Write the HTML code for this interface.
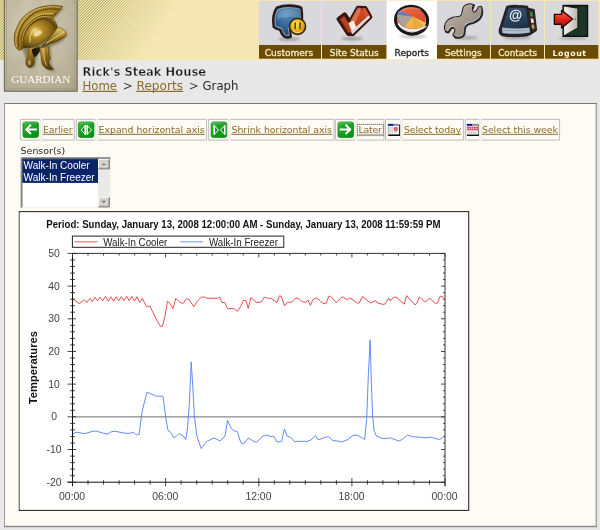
<!DOCTYPE html>
<html><head><meta charset="utf-8"><title>Graph</title>
<style>
html,body{margin:0;padding:0}
body{width:600px;height:530px;background:#e8e8e8;position:relative;overflow:hidden;font-family:"DejaVu Sans","Liberation Sans",sans-serif}
#hdr{position:absolute;left:0;top:0;width:600px;height:60px;background:#f5e6b3;overflow:hidden}
#hline{position:absolute;left:0;top:60px;width:600px;height:1px;background:#eee7cf;opacity:.5}
#stripes{position:absolute;left:0;top:0;width:290px;height:60px;background:repeating-linear-gradient(135deg,#b9b46c 0,#b9b46c 0.95px,#f5e6b3 0.95px,#f5e6b3 1.9px)}
#fade{position:absolute;left:78px;top:0;width:212px;height:60px;background:linear-gradient(118deg,rgba(245,230,179,0.1) 0,rgba(245,230,179,0.4) 18%,rgba(245,230,179,1) 56%)}
svg#pg{position:absolute;left:0;top:0;will-change:transform}
</style></head><body>
<div id="hdr"></div>
<svg id="pg" width="600" height="530" viewBox="0 0 600 530">
<defs>
<linearGradient id="gg" x1="0" y1="0" x2="0.6" y2="1"><stop offset="0" stop-color="#4fc255"/><stop offset="0.35" stop-color="#1fa62a"/><stop offset="1" stop-color="#0c9018"/></linearGradient>
<pattern id="dith" width="2.2" height="2.2" patternUnits="userSpaceOnUse"><rect width="2.2" height="2.2" fill="#fff"/><rect width="1.1" height="1.1" fill="#d6d3cb"/><rect x="1.1" y="1.1" width="1.1" height="1.1" fill="#d6d3cb"/></pattern>
<clipPath id="lgc"><rect x="4.3" y="0" width="72.9" height="91.2"/></clipPath>
</defs>
<clipPath id="hc"><rect x="0" y="0" width="300" height="60"/></clipPath>
<linearGradient id="hf" gradientUnits="userSpaceOnUse" x1="78" y1="30" x2="135" y2="69"><stop offset="0" stop-color="#f5e6b3" stop-opacity="0"/><stop offset="0.45" stop-color="#f5e6b3" stop-opacity="0.5"/><stop offset="1" stop-color="#f5e6b3" stop-opacity="1"/></linearGradient>
<filter id="sbl" x="0" y="0" width="100%" height="100%"><feGaussianBlur stdDeviation="0.45"/></filter>
<g clip-path="url(#hc)"><path d="M-62.00,61l62,-62M-59.30,61l62,-62M-56.60,61l62,-62M-53.90,61l62,-62M-51.20,61l62,-62M-48.50,61l62,-62M-45.80,61l62,-62M-43.10,61l62,-62M-40.40,61l62,-62M-37.70,61l62,-62M-35.00,61l62,-62M-32.30,61l62,-62M-29.60,61l62,-62M-26.90,61l62,-62M-24.20,61l62,-62M-21.50,61l62,-62M-18.80,61l62,-62M-16.10,61l62,-62M-13.40,61l62,-62M-10.70,61l62,-62M-8.00,61l62,-62M-5.30,61l62,-62M-2.60,61l62,-62M0.10,61l62,-62M2.80,61l62,-62M5.50,61l62,-62M8.20,61l62,-62M10.90,61l62,-62M13.60,61l62,-62M16.30,61l62,-62M19.00,61l62,-62M21.70,61l62,-62M24.40,61l62,-62M27.10,61l62,-62M29.80,61l62,-62M32.50,61l62,-62M35.20,61l62,-62M37.90,61l62,-62M40.60,61l62,-62M43.30,61l62,-62M46.00,61l62,-62M48.70,61l62,-62M51.40,61l62,-62M54.10,61l62,-62M56.80,61l62,-62M59.50,61l62,-62M62.20,61l62,-62M64.90,61l62,-62M67.60,61l62,-62M70.30,61l62,-62M73.00,61l62,-62M75.70,61l62,-62M78.40,61l62,-62M81.10,61l62,-62M83.80,61l62,-62M86.50,61l62,-62M89.20,61l62,-62M91.90,61l62,-62M94.60,61l62,-62M97.30,61l62,-62M100.00,61l62,-62M102.70,61l62,-62M105.40,61l62,-62M108.10,61l62,-62M110.80,61l62,-62M113.50,61l62,-62M116.20,61l62,-62M118.90,61l62,-62M121.60,61l62,-62M124.30,61l62,-62M127.00,61l62,-62M129.70,61l62,-62M132.40,61l62,-62M135.10,61l62,-62M137.80,61l62,-62M140.50,61l62,-62M143.20,61l62,-62M145.90,61l62,-62M148.60,61l62,-62M151.30,61l62,-62M154.00,61l62,-62M156.70,61l62,-62M159.40,61l62,-62M162.10,61l62,-62M164.80,61l62,-62M167.50,61l62,-62M170.20,61l62,-62M172.90,61l62,-62M175.60,61l62,-62M178.30,61l62,-62M181.00,61l62,-62M183.70,61l62,-62M186.40,61l62,-62M189.10,61l62,-62M191.80,61l62,-62M194.50,61l62,-62M197.20,61l62,-62M199.90,61l62,-62M202.60,61l62,-62M205.30,61l62,-62M208.00,61l62,-62M210.70,61l62,-62M213.40,61l62,-62M216.10,61l62,-62M218.80,61l62,-62M221.50,61l62,-62M224.20,61l62,-62M226.90,61l62,-62M229.60,61l62,-62M232.30,61l62,-62M235.00,61l62,-62M237.70,61l62,-62M240.40,61l62,-62M243.10,61l62,-62M245.80,61l62,-62M248.50,61l62,-62M251.20,61l62,-62M253.90,61l62,-62M256.60,61l62,-62M259.30,61l62,-62M262.00,61l62,-62M264.70,61l62,-62M267.40,61l62,-62M270.10,61l62,-62M272.80,61l62,-62M275.50,61l62,-62M278.20,61l62,-62M280.90,61l62,-62M283.60,61l62,-62M286.30,61l62,-62M289.00,61l62,-62" stroke="#9c9c50" stroke-width="1.0" fill="none" filter="url(#sbl)"/><rect x="77" y="0" width="223" height="60" fill="url(#hf)"/></g>
<rect x="0" y="59.9" width="600" height="0.45" fill="#f5e6b3"/>
<g id="panel"><rect x="4.5" y="103.5" width="592" height="423" fill="#fdfbf3"/>
<path d="M4,103.5H597" stroke="#7a7a7a" stroke-width="1"/><path d="M4.5,103V527" stroke="#9a9a9a" stroke-width="1"/>
<path d="M596.3,104V527" stroke="#a6a6a6" stroke-width="1.5"/><path d="M4,526.5H597" stroke="#8a8a8a" stroke-width="1.3"/></g>
<g id="tabbg">
<rect x="259" y="1" width="62" height="44" fill="#d9d9dd"/><rect x="259" y="45" width="62" height="13.7" fill="#6a4c07"/>
<rect x="322" y="1" width="64.5" height="44" fill="#d9d9dd"/><rect x="322" y="45" width="64.5" height="13.7" fill="#6a4c07"/>
<rect x="386.8" y="0.6" width="50" height="58.6" fill="#fff"/>
<rect x="437" y="1" width="53" height="44" fill="#d9d9dd"/><rect x="437" y="45" width="53" height="13.7" fill="#6a4c07"/>
<rect x="491" y="1" width="53" height="44" fill="#d9d9dd"/><rect x="491" y="45" width="53" height="13.7" fill="#6a4c07"/>
<rect x="545" y="1" width="53.3" height="44" fill="#d9d9dd"/><rect x="545" y="45" width="53.3" height="13.7" fill="#6a4c07"/>
</g>
<g id="logo" clip-path="url(#lgc)">
<defs>
<linearGradient id="gold1" x1="0" y1="0" x2="1" y2="1"><stop offset="0" stop-color="#e4c868"/><stop offset="0.4" stop-color="#a9821f"/><stop offset="1" stop-color="#58400a"/></linearGradient>
<linearGradient id="gold2" x1="0" y1="0" x2="0.4" y2="1"><stop offset="0" stop-color="#d6b656"/><stop offset="0.5" stop-color="#9a741a"/><stop offset="1" stop-color="#56400a"/></linearGradient>
<linearGradient id="gold3" x1="0" y1="0" x2="0" y2="1"><stop offset="0" stop-color="#e6cc70"/><stop offset="0.55" stop-color="#9c761a"/><stop offset="1" stop-color="#4e3808"/></linearGradient>
<radialGradient id="dome" cx="0.38" cy="0.42" r="0.75"><stop offset="0" stop-color="#f0dc90"/><stop offset="0.22" stop-color="#bf962e"/><stop offset="0.65" stop-color="#7c5c12"/><stop offset="1" stop-color="#3e2c08"/></radialGradient>
<radialGradient id="stone" cx="0.4" cy="0.3" r="0.9"><stop offset="0" stop-color="#d6cfb9"/><stop offset="0.55" stop-color="#c3baa2"/><stop offset="1" stop-color="#aaa085"/></radialGradient>
<filter id="lsh" x="-20%" y="-20%" width="140%" height="140%"><feGaussianBlur stdDeviation="1.3"/></filter>
<filter id="lb" x="-5%" y="-5%" width="110%" height="110%"><feGaussianBlur stdDeviation="0.3"/></filter>
<filter id="tex" x="0" y="0" width="100%" height="100%"><feTurbulence type="fractalNoise" baseFrequency="0.09" numOctaves="3" seed="4" result="n"/><feColorMatrix in="n" type="matrix" values="0 0 0 0 0.45  0 0 0 0 0.4  0 0 0 0 0.3  0.9 0.9 0 0 -0.62"/></filter>
</defs>
<rect x="4" y="0" width="74" height="93" fill="url(#stone)"/>
<rect x="4" y="0" width="74" height="93" filter="url(#tex)" opacity="0.55"/>
<rect x="6.6" y="-2" width="68.2" height="90.8" fill="none" stroke="#8f866d" stroke-width="0.7" opacity="0.55"/>
<g filter="url(#lb)">
<!-- soft shadow -->
<path d="M62.5,6.4C50,4 36,6 25,15.6C18,25 14,37 16,47L22,49C24,56 26,60 26.4,65C30,68 34,66 34,62L36,50L40,48C41,56 41,62 44,66C47,69 50,70 53.3,69.3C50,64 48,60 50,56C49,52 49,49 49,45C56,42 63,39 66,33C62,29 58,28 56,26L52,17Z" fill="#4a3c18" opacity="0.5" filter="url(#lsh)" transform="translate(1.6,1.8)"/>
<!-- crest outer -->
<path d="M62.5,6.4C58,5.4 54,5.2 50.4,5.6C45,6 40,7 36.3,8.5C32,10.4 28,12.8 25,15.6C21.6,18.6 19.4,22 17.9,25.5C15.6,30 14.2,34 14.4,36.8C14,41 14.6,44.4 15.8,46.7C16.8,48.6 18,49.8 19.3,50.2L22.1,48.8C21.4,45 21,41.4 21.4,38.2C22.2,34.4 23.2,31 25,28.3C26.8,25 29.2,22 32,19.8C34.6,17.8 37.4,16.4 40.5,15.6C43,15 45.4,14.8 47.6,16.3C50.6,16 53.6,15 56.1,13.4C58.6,11.4 60.8,9 62.5,6.4Z" fill="url(#gold1)" stroke="#4e380a" stroke-width="0.7"/>
<!-- crest groove + ribs -->
<path d="M58.6,9.6C52,8 42,9 34.6,13C27,17.6 21.6,25 19.2,33C18,38 18,43 18.8,47.6" fill="none" stroke="#5a400c" stroke-width="1.1" opacity="0.85"/>
<path d="M60.4,7.6C53,6 42,7 34,11C26,15.6 19.6,24 17,33C15.8,38 15.8,43 16.6,47" fill="none" stroke="#f3e09a" stroke-width="0.8" opacity="0.7"/>
<path d="M59.6,8.4C52.6,6.8 42,7.8 34.2,12C26.4,16.6 20.4,24.6 18,33C16.8,38 16.8,43 17.6,47.2" fill="none" stroke="#5a400c" stroke-width="1.6" stroke-dasharray="0.7 1.3" opacity="0.8"/>
<path d="M54,14C49,13 42,13.4 36.4,16.4C30,20 25.4,26 23.2,32.6C22,36.6 21.8,41.6 22.4,45.6" fill="none" stroke="#dcc064" stroke-width="1.3" opacity="0.75"/>
<!-- inner crest band -->
<path d="M21.6,48.6C20.8,43 21.2,37 23.4,31.4C26,25.6 30.6,20.6 36.4,17.6C40,15.8 44,15 47.6,16.3C50.6,16 53.6,15 56.1,13.4L52.6,18.6C54.6,20.4 56.4,23.4 57.4,26.4L50,30L30,40L24,47.4Z" fill="#8f6e1c" stroke="#46320a" stroke-width="0.5"/>
<path d="M23.6,46C23,40 24.4,34 27.4,29C30.6,24 35.4,20 41,18.4C44.4,17.6 48,17.8 51,19" fill="none" stroke="#3e2c08" stroke-width="1" opacity="0.7"/>
<path d="M22.4,46.6C21.8,40 23,34 26,28.6C29.4,23 34.6,18.6 40.6,17C44,16.2 47,16.4 50,17.4" fill="none" stroke="#d9bc5e" stroke-width="0.9" opacity="0.8"/>
<!-- dome -->
<path d="M22.8,47.2C22.2,41 23.4,35.6 26.4,31C29,26.6 32.4,23.4 36.3,21.2C39.6,19.6 43,18.8 46.2,19.1C49.6,19.6 52.6,21.4 54.7,24C56.2,25.6 57.2,27.6 57.5,29.7C53,33.6 47,38.6 40.5,43.8C36,45.6 32,46.6 29.2,46.7C27,47.4 24.6,47.6 22.8,47.2Z" fill="url(#dome)" stroke="#46320a" stroke-width="0.6"/>
<path d="M30,42C29.4,37 31,32 34.6,28.6" fill="none" stroke="#f6e8a8" stroke-width="1.6" opacity="0.55" stroke-linecap="round"/>
<ellipse cx="37.6" cy="33.6" rx="4.6" ry="2.4" fill="#fbf0b8" opacity="0.7" transform="rotate(-24 37.6 33.6)"/>
<path d="M46,20.4C50,21.4 53.6,24.4 55.4,28.4" fill="none" stroke="#5a400c" stroke-width="1.2" opacity="0.6"/>
<!-- visor / brow -->
<path d="M42,46.7C45,42.4 48,39.4 50.4,36.8C53,33.6 55.6,30.4 57.5,27.6C60.4,27.8 63,28.8 64.6,30.4C65.8,31.2 66.2,32.2 66,33.2C66,34.6 65.6,35.8 64.6,36.8C60,39.8 54.6,42 49,43.8C46.6,44.8 44.2,45.8 42,46.7Z" fill="url(#gold3)" stroke="#46320a" stroke-width="0.6"/>
<path d="M45.6,43.6C52,39.6 58.6,35.4 64.4,31.6" fill="none" stroke="#f4e4a0" stroke-width="1" opacity="0.85"/>
<path d="M46.6,45.4C53,42.6 59.6,39.4 64.6,36" fill="none" stroke="#4e380a" stroke-width="1.4" stroke-dasharray="0.8 1" opacity="0.75"/>
<path d="M30.6,48.4L40.2,47.2L39.6,52L37,55.6L34.4,57.6L32.4,54Z" fill="#2a1c06"/>
<!-- neck guard -->
<path d="M23.6,46.9C26,47.6 28,47.4 29.4,47C29,50 28.6,53.4 27.8,56.6C26,59.4 25.4,62.6 26.4,65C27.6,67.2 29.4,67.8 30.6,67.2C32.6,66.4 34,64.6 34.2,62.2C34.2,60.2 33.6,58.4 33.5,56.6C33.8,54 34.8,51.6 36.3,49.5L38.6,46.2C34,47.6 29,48 23.6,46.9Z" fill="url(#gold2)" stroke="#46320a" stroke-width="0.6"/>
<path d="M31.6,49.4C33.6,48.6 36,48 37.6,47.6C36,50.4 35,53.4 34.6,56.8C33.2,55 32,52.4 31.6,49.4Z" fill="#241805"/>
<ellipse cx="29.4" cy="62.6" rx="1.6" ry="2.6" fill="#f0dc90" opacity="0.5"/>
<!-- cheek piece -->
<path d="M39.8,48C42.6,47.2 45.6,46.8 48.3,46.7C48.6,50 48.8,53.4 49,56.6L50.6,57.8L49.6,59.4C48.8,60.2 48.4,61.2 48.3,62.2C49.4,65 51.2,67.4 53.3,69.3C50.4,70 47.6,69.4 45.6,68C43.6,66.6 42.4,65 42,63.6C41.4,61.4 41.2,59 41.2,56.6C41,54 40.4,51 39.8,48Z" fill="url(#gold2)" stroke="#46320a" stroke-width="0.6"/>
<path d="M43.4,48.6C43.8,54 44,60 46.6,65.6" fill="none" stroke="#f1dc8c" stroke-width="1" opacity="0.65"/>
<path d="M46,48.4C46.4,54 46.6,59.6 49.4,66" fill="none" stroke="#4e380a" stroke-width="1.3" stroke-dasharray="0.7 1" opacity="0.7"/>
</g>
<text x="40.7" y="82.9" text-anchor="middle" font-family="Liberation Serif, serif" font-size="11.2" fill="#fdfcf8" style="letter-spacing:-0.1px">GUARDIAN</text>

</g>
<rect x="4.35" y="-1" width="72.8" height="92.2" fill="none" stroke="#6f6a5c" stroke-width="1.1"/>
<defs>
<filter id="sh" x="-30%" y="-30%" width="160%" height="160%"><feGaussianBlur stdDeviation="1.1"/></filter>
<filter id="b3" x="-10%" y="-10%" width="120%" height="120%"><feGaussianBlur stdDeviation="0.35"/></filter>
<radialGradient id="bub" cx="0.45" cy="0.3" r="0.8"><stop offset="0" stop-color="#5c8cb6"/><stop offset="0.5" stop-color="#2e5f90"/><stop offset="1" stop-color="#193854"/></radialGradient>
<radialGradient id="smi" cx="0.4" cy="0.35" r="0.75"><stop offset="0" stop-color="#ffe052"/><stop offset="0.6" stop-color="#e4aa12"/><stop offset="1" stop-color="#9c6a04"/></radialGradient>
<linearGradient id="chk" x1="0" y1="0" x2="1" y2="1"><stop offset="0" stop-color="#e0653a"/><stop offset="0.5" stop-color="#c64a22"/><stop offset="1" stop-color="#8e2a10"/></linearGradient>
<linearGradient id="wr" x1="0" y1="0" x2="1" y2="1"><stop offset="0" stop-color="#c8beb2"/><stop offset="0.5" stop-color="#a89c90"/><stop offset="1" stop-color="#8a8078"/></linearGradient>
<linearGradient id="bk" x1="0" y1="0" x2="0.3" y2="1"><stop offset="0" stop-color="#3a5a78"/><stop offset="0.6" stop-color="#243f5a"/><stop offset="1" stop-color="#1a2c40"/></linearGradient>
<linearGradient id="pie1" x1="0" y1="0" x2="1" y2="1"><stop offset="0" stop-color="#e8704a"/><stop offset="1" stop-color="#d2402a"/></linearGradient>
<linearGradient id="arr" x1="0" y1="0" x2="0" y2="1"><stop offset="0" stop-color="#ff6a50"/><stop offset="0.5" stop-color="#e02418"/><stop offset="1" stop-color="#9a0c08"/></linearGradient>
<linearGradient id="door" x1="0" y1="0" x2="1" y2="0"><stop offset="0" stop-color="#f4f2ec"/><stop offset="1" stop-color="#b9b7b0"/></linearGradient>
</defs>
<!-- Customers -->
<ellipse cx="289" cy="39" rx="11" ry="2" fill="#000" opacity="0.22" filter="url(#sh)"/>
<g filter="url(#b3)">
<path d="M277,7.6C284,4.8 296,5 301.2,7.8C302.2,14 302,21.6 300.8,26.8C297.4,28.8 293,29.8 289.6,30L290.8,36.6C289,37.6 286.4,37.6 284.6,36.6C282.4,35 281,32.6 280.2,29.8C277.8,29.2 275.4,28.2 273.8,27C272.8,20.6 273.2,13 277,7.6Z" fill="url(#bub)" stroke="#2a1b1a" stroke-width="2.6" stroke-linejoin="round"/>
<path d="M278.2,9.4C284.4,7 295,7.2 299.8,9.4C300.6,14.8 300.4,21 299.4,25.6C296.4,27.2 292.4,28.2 288.4,28.4L289.2,35.2C287.6,35.8 286.4,35.6 285.4,35C283.6,33.6 282.4,31.4 281.8,28.6C279.4,28 277,27.2 275.4,26C274.6,20.4 275,13.8 278.2,9.4Z" fill="none" stroke="#aeb9c2" stroke-width="1.1" opacity="0.7"/>
<path d="M279,10.6C284.6,8.4 294.4,8.6 298.8,10.4C299.2,13.2 299.2,16 298.8,18.4C292,15.8 284,16.6 277.2,19.6C277,16.2 277.6,13.2 279,10.6Z" fill="#9cc4e4" opacity="0.36"/>
<circle cx="297.6" cy="26.4" r="8" fill="url(#smi)" stroke="#35220a" stroke-width="1.5"/>
<path d="M295.2,23V28.4 M300,23V28.4" stroke="#5a3a06" stroke-width="1.5" stroke-linecap="round"/>
<path d="M292.6,30.4C295,33.2 300,33.2 302.6,30.4" stroke="#fff2a8" stroke-width="1" fill="none" opacity="0.8"/>
</g>
<!-- Site status -->
<ellipse cx="352" cy="38.6" rx="11" ry="1.8" fill="#000" opacity="0.25" filter="url(#sh)"/>
<g filter="url(#b3)">
<path d="M338.4,19L344.6,14.2L350,21.6L357.8,7.6L365.4,8L370.4,17L352.6,34.4L348.2,34Z" fill="url(#chk)" stroke="#38190f" stroke-width="3.9" stroke-linejoin="round"/>
<path d="M350,21.6L357.8,7.6L361.6,8.2L353.8,25.6Z" fill="#e8795a" opacity="0.85"/>
<path d="M361.6,8.2L365.4,8L370.4,17L366.8,20.4Z" fill="#d4522e"/>
<path d="M348.6,23L353.4,20.4L356.4,27.2L351.6,31Z" fill="#f6efe6"/>
<path d="M352.6,34.2L370.2,17.2L368.4,15.4L350.8,31.8Z" fill="#e6e2ea" opacity="0.95"/>
<path d="M339.4,19.2L344.2,15.6L350.8,31.8L348.2,33Z" fill="#b43c1c" opacity="0.7"/>
</g>
<!-- Reports -->
<ellipse cx="413" cy="36.6" rx="14" ry="2" fill="#000" opacity="0.2" filter="url(#sh)"/>
<g filter="url(#b3)">
<ellipse cx="411.6" cy="20.2" rx="16" ry="13.8" fill="#d4d4da" stroke="#1c1818" stroke-width="3.2" transform="rotate(8 411.6 20.2)"/>
<ellipse cx="411.4" cy="18.2" rx="14.4" ry="10.8" fill="url(#pie1)" transform="rotate(8 411.4 18.2)"/>
<path d="M412.6,16.6L397.2,14.6C397.4,19.6 400,24 404.4,26.6Z" fill="#aaa39d"/>
<path d="M412.6,16.6L397.2,14.6C397.4,13 398,11.6 399,10.4Z" fill="#5c7fd0"/>
<path d="M412.6,16.6L404.4,26.6C410,29.6 418,29.6 424,26.2Z" fill="#f2a73c"/>
<path d="M412.6,16.6L424,26.2C425,25.4 425.6,24.2 425.8,23Z" fill="#ecca4c"/>
<path d="M412.6,16.6L404.4,26.6C407,28 410,28.8 413,29Z" fill="#e9c15a" opacity="0.6"/>
<path d="M398,23.6C402,30.6 418,33 426.4,26" fill="none" stroke="#f6f6fa" stroke-width="1.5" opacity="0.9"/>
<path d="M400,11.6C404,7.6 414,6.4 421,9.6" fill="none" stroke="#f6b9a0" stroke-width="1" opacity="0.6"/>
</g>
<!-- Settings -->
<ellipse cx="466" cy="37.8" rx="12" ry="1.8" fill="#000" opacity="0.22" filter="url(#sh)"/>
<clipPath id="wrc"><path d="M470.6,4.3L474,5.3C473,7 472.2,9 472.2,10.6C472.4,12 473.4,12.6 474.6,12.4C475.6,12.2 476.2,11.8 476.6,11.2L478.8,7.2L481,6.8C482.4,9.6 482.6,13 481.4,16C480,19.6 476.6,21.6 473,23C469.4,24 466.4,24.4 465.2,27.4C464.4,30 465,33 464,35.2C462.6,37 460.4,37.8 458,37.8L455.4,37.4L453.4,34.8C454.6,33 455.4,31.4 455.4,30C455.2,28.6 454.2,27.8 453,27.8C452,27.8 451.4,28.2 450.8,28.8L448.4,32.4L446.2,32C444.8,29.6 444.6,26.4 445.8,23.6C447.2,20.4 450.4,18.6 454,17.6C457.6,17 460.6,17.6 462,14.6C462.8,12 462.8,9 464,7C465.6,5.2 468,4.2 470.6,4.3Z"/></clipPath>
<g filter="url(#b3)">
<path d="M470.6,4.3L474,5.3C473,7 472.2,9 472.2,10.6C472.4,12 473.4,12.6 474.6,12.4C475.6,12.2 476.2,11.8 476.6,11.2L478.8,7.2L481,6.8C482.4,9.6 482.6,13 481.4,16C480,19.6 476.6,21.6 473,23C469.4,24 466.4,24.4 465.2,27.4C464.4,30 465,33 464,35.2C462.6,37 460.4,37.8 458,37.8L455.4,37.4L453.4,34.8C454.6,33 455.4,31.4 455.4,30C455.2,28.6 454.2,27.8 453,27.8C452,27.8 451.4,28.2 450.8,28.8L448.4,32.4L446.2,32C444.8,29.6 444.6,26.4 445.8,23.6C447.2,20.4 450.4,18.6 454,17.6C457.6,17 460.6,17.6 462,14.6C462.8,12 462.8,9 464,7C465.6,5.2 468,4.2 470.6,4.3Z" fill="#dde3ea" stroke="#2a2626" stroke-width="2.1" stroke-linejoin="round"/>
<g clip-path="url(#wrc)"><path d="M470.6,4.3L474,5.3C473,7 472.2,9 472.2,10.6C472.4,12 473.4,12.6 474.6,12.4C475.6,12.2 476.2,11.8 476.6,11.2L478.8,7.2L481,6.8C482.4,9.6 482.6,13 481.4,16C480,19.6 476.6,21.6 473,23C469.4,24 466.4,24.4 465.2,27.4C464.4,30 465,33 464,35.2C462.6,37 460.4,37.8 458,37.8L455.4,37.4L453.4,34.8C454.6,33 455.4,31.4 455.4,30C455.2,28.6 454.2,27.8 453,27.8C452,27.8 451.4,28.2 450.8,28.8L448.4,32.4L446.2,32C444.8,29.6 444.6,26.4 445.8,23.6C447.2,20.4 450.4,18.6 454,17.6C457.6,17 460.6,17.6 462,14.6C462.8,12 462.8,9 464,7C465.6,5.2 468,4.2 470.6,4.3Z" fill="url(#wr)" stroke="url(#wr)" stroke-width="1" transform="translate(-1,-2)"/></g>
</g>
<!-- Contacts -->
<ellipse cx="517" cy="37.8" rx="14" ry="1.8" fill="#000" opacity="0.22" filter="url(#sh)"/>
<g filter="url(#b3)">
<path d="M527,8.6L533.6,10L536,30L530,34Z" fill="#3a3230" stroke="#2a2320" stroke-width="2.2" stroke-linejoin="round"/>
<path d="M529.6,11.6L532.6,12.4L533.2,16.6L530.2,16.2Z" fill="#2f8a3c"/>
<path d="M530.4,18.4L533.4,18.8L534,23L531,22.8Z" fill="#e8e2d2"/>
<path d="M531.2,24.6L534.2,24.8L534.6,28.4L531.6,28.8Z" fill="#c9a050"/>
<path d="M507.4,7C512,6 522,6 527,7.2L530.8,30C530.4,33 528.8,34.6 526.4,35.2C519,36 508,36 502.4,34.8C500.4,34 499.8,31.6 500.2,29.4Z" fill="url(#bk)" stroke="#2a2320" stroke-width="2.8" stroke-linejoin="round"/>
<path d="M502,27C509,28.4 521,28.4 529.4,27.2L530,32.6C521,34.2 509,34.2 502.4,33Z" fill="#c4d2df" opacity="0.9"/>
<path d="M502.4,29.8C510,31 521,31 529.6,29.8" stroke="#7d93a8" stroke-width="0.7" fill="none"/>
<path d="M502,27C509,28.4 521,28.4 529.4,27.2" stroke="#1c2a3a" stroke-width="0.8" fill="none"/>
<text x="515.6" y="19.4" text-anchor="middle" font-family="Liberation Sans, sans-serif" font-weight="bold" font-size="13.5" fill="#f2f4f6" transform="rotate(-3 516 16)">@</text>
</g>
<!-- Logout -->
<ellipse cx="573" cy="38.2" rx="14" ry="1.6" fill="#000" opacity="0.2" filter="url(#sh)"/>
<g filter="url(#b3)">
<rect x="563" y="5.4" width="24.6" height="31" fill="#16201a" stroke="#0c0f0d" stroke-width="1.2"/>
<path d="M577.6,6.4H586.6V35.4H566Z" fill="#1e3626"/>
<path d="M563.6,6L577.8,8.2V27.8L563.6,36Z" fill="url(#door)" stroke="#101010" stroke-width="0.8"/>
<circle cx="575.4" cy="19.2" r="0.9" fill="#6c6c6c"/>
<path d="M554.4,14.4H561.6V10.4L572.6,19L561.6,28V24.2H554.4Z" fill="url(#arr)" stroke="#2a0604" stroke-width="1.4" stroke-linejoin="round"/>
</g>

<g font-family="DejaVu Sans, Liberation Sans, sans-serif" font-size="9" fill="#f7ebbe" stroke="#f7ebbe" stroke-width="0.3" text-anchor="middle">
<text x="289" y="56.1">Customers</text><text x="354.2" y="56.1" textLength="48.8" lengthAdjust="spacingAndGlyphs">Site Status</text><text x="411.8" y="56.1" fill="#1c1c1c" stroke="#1c1c1c">Reports</text><text x="463.3" y="56.1" textLength="36.8" lengthAdjust="spacingAndGlyphs">Settings</text><text x="517.6" y="56.1" textLength="38.8" lengthAdjust="spacingAndGlyphs">Contacts</text>
<text x="569.6" y="55.9" font-weight="bold" font-size="7.9" letter-spacing="0.55" fill="#fdf6d8" stroke="none">Logout</text></g>
<text x="82.6" y="75.7" font-family="DejaVu Sans, Liberation Sans, sans-serif" font-weight="bold" font-size="11.6" fill="#161616" stroke="#e8e8e8" stroke-width="0.4" textLength="123.5" lengthAdjust="spacingAndGlyphs">Rick's Steak House</text>
<g font-family="DejaVu Sans, Liberation Sans, sans-serif" font-size="11.9"><text x="82.5" y="89.5" fill="#8a6c2c" textLength="34.5" lengthAdjust="spacingAndGlyphs">Home</text><text x="122.7" y="89.5" fill="#444">&gt;</text><text x="136.5" y="89.5" fill="#8a6c2c" textLength="46.5" lengthAdjust="spacingAndGlyphs">Reports</text><text x="188.7" y="89.5" fill="#444">&gt;</text><text x="202.5" y="89.5" fill="#2a2a2a" textLength="36" lengthAdjust="spacingAndGlyphs">Graph</text></g>
<path d="M82.3,91.4H117.3M136.3,91.4H183.2" stroke="#8a6c2c" stroke-width="1.1"/>
<text x="20.6" y="153.7" font-family="DejaVu Sans, Liberation Sans, sans-serif" font-size="9.45" fill="#222">Sensor(s)</text>
<g id="toolbar" fill="none" stroke-width="1"><path d="M40.4,119.4H20.3V140.1H40.4" stroke="#bcbcbc"/><path d="M40.4,119.4V140.1" stroke="#ece9e2"/><path d="M42.4,119.4H74.2V140.1H42.4" stroke="#bcbcbc"/><path d="M42.4,119.4V140.1" stroke="#ece9e2"/><path d="M95.5,119.4H76.3V140.1H95.5" stroke="#bcbcbc"/><path d="M95.5,119.4V140.1" stroke="#ece9e2"/><path d="M97.4,119.4H206.6V140.1H97.4" stroke="#bcbcbc"/><path d="M97.4,119.4V140.1" stroke="#ece9e2"/><path d="M228.3,119.4H208.7V140.1H228.3" stroke="#bcbcbc"/><path d="M228.3,119.4V140.1" stroke="#ece9e2"/><path d="M230.1,119.4H334.0V140.1H230.1" stroke="#bcbcbc"/><path d="M230.1,119.4V140.1" stroke="#ece9e2"/><path d="M355.1,119.4H335.4V140.1H355.1" stroke="#bcbcbc"/><path d="M355.1,119.4V140.1" stroke="#ece9e2"/><path d="M357.1,119.4H383.9V140.1H357.1" stroke="#bcbcbc"/><path d="M357.1,119.4V140.1" stroke="#ece9e2"/><path d="M400.5,119.4H385.5V140.1H400.5" stroke="#bcbcbc"/><path d="M400.5,119.4V140.1" stroke="#ece9e2"/><path d="M402.5,119.4H463.4V140.1H402.5" stroke="#bcbcbc"/><path d="M402.5,119.4V140.1" stroke="#ece9e2"/><path d="M479.3,119.4H465.3V140.1H479.3" stroke="#bcbcbc"/><path d="M479.3,119.4V140.1" stroke="#ece9e2"/><path d="M481.1,119.4H559.6V140.1H481.1" stroke="#bcbcbc"/><path d="M481.1,119.4V140.1" stroke="#ece9e2"/></g><g transform="translate(22.6,121.6)"><rect x="0.35" y="0.35" width="15.6" height="15.6" rx="2.2" fill="url(#gg)" stroke="#0b8a16" stroke-width="0.7"/><path d="M1.6,1.4H14.6" stroke="#7fd684" stroke-width="0.8" opacity="0.7"/><path d="M14.2,7.8H4.2 M8.3,3.2L3.7,7.8L8.3,12.4" stroke="#fff" stroke-width="2" fill="none"/></g><g transform="translate(78.0,121.6)"><rect x="0.35" y="0.35" width="15.6" height="15.6" rx="2.2" fill="url(#gg)" stroke="#0b8a16" stroke-width="0.7"/><path d="M1.6,1.4H14.6" stroke="#7fd684" stroke-width="0.8" opacity="0.7"/><path d="M7.3,3.9V12.7L3.2,8.3Z M9.3,3.9V12.7L13.6,8.3Z" stroke="#fff" stroke-width="1" fill="#138f1d"/><path d="M7.3,3.5V13.1 M9.3,3.5V13.1" stroke="#fff" stroke-width="1.5"/></g><g transform="translate(210.8,121.6)"><rect x="0.35" y="0.35" width="15.6" height="15.6" rx="2.2" fill="url(#gg)" stroke="#0b8a16" stroke-width="0.7"/><path d="M1.6,1.4H14.6" stroke="#7fd684" stroke-width="0.8" opacity="0.7"/><path d="M3.5,4.1V12.7L7.7,8.4Z M13.9,4.1V12.7L9.7,8.4Z" stroke="#fff" stroke-width="1" fill="#138f1d"/><path d="M3.5,3.7V13.1 M13.9,3.7V13.1" stroke="#fff" stroke-width="1.5"/></g><g transform="translate(337.6,121.6)"><rect x="0.35" y="0.35" width="15.6" height="15.6" rx="2.2" fill="url(#gg)" stroke="#0b8a16" stroke-width="0.7"/><path d="M1.6,1.4H14.6" stroke="#7fd684" stroke-width="0.8" opacity="0.7"/><path d="M2.1,7.8H12.1 M8,3.2L12.6,7.8L8,12.4" stroke="#fff" stroke-width="2" fill="none"/></g><g transform="translate(387.9,123.9)"><rect x="0.3" y="0.6" width="11.9" height="11.5" fill="#111"/><rect x="0" y="0" width="11.2" height="10.5" fill="#fff"/><rect x="0" y="0" width="5.8" height="1.9" fill="#00109a"/><rect x="5.8" y="0" width="5.2" height="1.9" fill="#8a8a8a"/><path d="M2.1,2V9.9M4.3,2V9.9M6.5,2V9.9M8.7,2V9.9M0,4H11M0,6H11M0,8H11" stroke="#c4c4c4" stroke-width="0.7"/><circle cx="7.9" cy="5.2" r="2.1" fill="#cf4a5a"/><rect x="6.9" y="4.8" width="2" height="0.8" fill="#f4c0c6"/><rect x="0" y="1.9" width="0.7" height="8" fill="#9a9a9a"/></g><g transform="translate(466.9,123.9)"><rect x="0" y="0.6" width="12" height="11.5" fill="#111"/><rect x="0" y="0" width="11.4" height="10.6" fill="#fff"/><rect x="0" y="0" width="5.6" height="1.9" fill="#00109a"/><rect x="5.6" y="0" width="6.4" height="1.9" fill="#8a8a8a"/><rect x="0" y="2.4" width="11.4" height="4.4" fill="#f1c9cf"/><path d="M0.3,3.5H11.4M0.3,5.7H11.4" stroke="#cf3f55" stroke-width="1.5" stroke-dasharray="1.7 0.55"/><path d="M2.2,7.1V10.1M4.4,7.1V10.1M6.6,7.1V10.1M8.8,7.1V10.1M0,8.6H12" stroke="#c4c4c4" stroke-width="0.7"/></g><g font-family="DejaVu Sans, Liberation Sans, sans-serif" font-size="9.38" fill="#8a6c2c"><text x="43.0" y="133.1" textLength="29.5" lengthAdjust="spacing">Earlier</text><text x="98.5" y="133.1" textLength="106.2" lengthAdjust="spacing">Expand horizontal axis</text><text x="231.5" y="133.1" textLength="100.5" lengthAdjust="spacing">Shrink horizontal axis</text><text x="358.6" y="133.1" textLength="23.2" lengthAdjust="spacing">Later</text><text x="403.9" y="133.1" textLength="57.3" lengthAdjust="spacing">Select today</text><text x="482.0" y="133.1" textLength="75.9" lengthAdjust="spacing">Select this week</text></g><g stroke="#8a6c2c" stroke-width="1"><path d="M42.8,134.3H72.7"/><path d="M98.3,134.3H204.89999999999998"/><path d="M231.3,134.3H332.2"/><path d="M403.7,134.3H461.4"/><path d="M481.8,134.3H558.1"/></g><rect x="357.3" y="124.4" width="26" height="11.2" fill="none" stroke="#222" stroke-width="0.9" stroke-dasharray="1 1"/><path d="M358.4,134.3H382" stroke="#8a6c2c" stroke-width="1" opacity="0.6"/>
<g id="sel">
<rect x="20.7" y="157.2" width="90" height="50.9" fill="#fff"/>
<path d="M110.2,157.6V207.7H21" stroke="#f0eee6" stroke-width="0.9" fill="none"/>
<path d="M21.1,208.1V157.6H110.7" stroke="#8a8a8a" stroke-width="0.9" fill="none"/>
<path d="M21.95,207.3V158.45H109.8" stroke="#404040" stroke-width="0.85" fill="none"/>
<rect x="22.35" y="159.1" width="75.75" height="23.8" fill="#0a246a"/>
<g font-family="Liberation Sans, sans-serif" font-size="10.05" fill="#fff"><text x="23.6" y="168.6">Walk-In Cooler</text><text x="23.6" y="180.5">Walk-In Freezer</text></g>
<rect x="98.1" y="158.9" width="11.6" height="48.4" fill="url(#dith)"/>
<g id="sbu"><rect x="98.1" y="158.9" width="11.6" height="10.3" fill="#d6d3cb"/><path d="M98.5,168.8V159.3H109.3" stroke="#fff" stroke-width="0.9" fill="none"/><path d="M109.3,159.3V168.8H98.5" stroke="#6a6a6a" stroke-width="0.9" fill="none"/><path d="M108.45,160.2V167.95H99.4" stroke="#a8a59c" stroke-width="0.8" fill="none"/><path d="M101.4,165.6L103.9,163L106.4,165.6Z" fill="#86837c"/><path d="M102.3,166.4H107.2" stroke="#fff" stroke-width="0.7"/></g>
<g id="sbd"><rect x="98.1" y="196.9" width="11.6" height="10.4" fill="#d6d3cb"/><path d="M98.5,206.9V197.3H109.3" stroke="#fff" stroke-width="0.9" fill="none"/><path d="M109.3,197.3V206.9H98.5" stroke="#6a6a6a" stroke-width="0.9" fill="none"/><path d="M108.45,198.2V206.05H99.4" stroke="#a8a59c" stroke-width="0.8" fill="none"/><path d="M101.4,200.8L103.9,203.4L106.4,200.8Z" fill="#86837c"/><path d="M104.6,204L107,201.4" stroke="#fff" stroke-width="0.7"/></g>
</g>
<g id="chart">
<rect x="19.3" y="211.6" width="449.4" height="298.8" fill="#fff" stroke="#2e2e2e" stroke-width="1.1"/><path d="M19.3,212.3V509.8" stroke="#fff" stroke-width="1.1" opacity="0.3"/>
<text x="46.3" y="228" font-family="Liberation Sans, sans-serif" font-weight="bold" font-size="10.2" fill="#111" textLength="394.2" lengthAdjust="spacingAndGlyphs">Period: Sunday, January 13, 2008 12:00:00 AM - Sunday, January 13, 2008 11:59:59 PM</text>
<rect x="72.4" y="236.1" width="211.4" height="11.2" fill="#fff" stroke="#222" stroke-width="1"/>
<path d="M74.3,241.8H97.5" stroke="#e66a6a" stroke-width="1.1"/>
<path d="M180.2,241.8H203" stroke="#7ba0ff" stroke-width="1.1"/>
<g font-family="Liberation Sans, sans-serif" font-size="10.2" fill="#222"><text x="103.3" y="245.6" textLength="64" lengthAdjust="spacingAndGlyphs">Walk-In Cooler</text><text x="209" y="245.6" textLength="69" lengthAdjust="spacingAndGlyphs">Walk-In Freezer</text></g>
<path d="M72.5,416.8H445" stroke="#8a8a8a" stroke-width="1.3"/>
<polyline fill="none" stroke="#e04848" stroke-width="0.95" stroke-linejoin="round" points="72.5,298.7 79.2,303.7 84.2,299.7 86.7,302.5 90.0,298.3 92.2,301.7 95.0,297.2 97.5,300.8 100.0,297.2 102.8,300.8 105.5,296.3 108.3,301.3 110.8,296.7 113.7,301.3 116.2,296.7 118.8,300.8 121.3,296.7 123.8,300.8 126.7,296.3 129.2,300.8 131.7,296.3 134.5,300.8 137.0,296.7 139.7,302.5 142.2,298.3 146.3,306.3 150.0,306.3 156.7,320.0 160.5,326.3 162.5,326.3 165.0,315.8 167.5,301.3 170.0,303.3 173.0,308.7 175.8,298.3 180.0,302.5 183.3,303.3 186.3,298.8 188.7,299.2 193.8,306.7 197.5,300.8 201.3,297.2 204.2,297.0 206.7,298.3 217.5,298.3 219.7,297.2 222.0,302.5 224.7,302.5 227.5,308.7 234.2,308.7 237.5,311.3 240.5,306.7 243.3,300.5 245.8,300.5 248.3,308.3 250.8,297.5 256.7,302.5 261.3,302.0 264.2,297.2 267.5,298.3 270.8,298.3 274.2,300.3 276.7,302.5 279.5,295.8 281.3,296.3 284.5,305.8 287.5,302.2 291.7,302.2 295.3,298.3 298.0,298.3 302.5,301.7 305.8,302.5 307.8,300.0 310.3,305.3 313.3,299.2 316.7,298.0 322.8,303.3 325.8,303.8 328.8,296.3 330.5,296.3 336.3,302.5 341.7,297.2 343.3,297.2 347.3,299.8 349.5,298.3 351.9,298.9 357.4,303.3 359.3,302.9 362.4,296.5 370.3,302.9 375.8,300.7 377.2,302.9 383.1,304.4 385.5,303.8 388.6,298.0 389.9,300.7 394.1,297.0 396.8,297.4 404.2,304.2 406.6,295.6 414.8,304.8 416.6,303.8 419.4,296.9 424.3,301.6 426.2,301.1 429.8,298.3 435.3,303.5 437.5,302.9 440.3,296.1 442.7,296.9 443.2,298.3"/>
<polyline fill="none" stroke="#5b86f7" stroke-width="0.95" stroke-linejoin="round" points="72.5,433.7 76.7,432.2 84.2,433.7 93.3,431.2 96.7,431.2 103.3,433.3 108.0,434.2 111.3,431.7 115.0,431.2 125.0,433.3 130.0,433.3 133.3,432.2 136.7,435.0 139.2,434.2 142.0,411.7 147.0,392.2 156.7,396.2 163.0,396.2 165.6,417.0 168.0,430.4 170.3,431.8 173.5,437.4 176.0,436.7 179.1,433.5 183.3,436.0 185.8,439.6 187.5,428.1 189.4,403.6 191.2,361.9 193.1,391.3 194.3,415.8 196.8,435.5 201.2,448.5 206.6,441.6 214.0,437.9 220.1,441.1 225.0,436.0 227.5,420.3 231.1,428.1 233.6,430.6 237.3,431.8 240.9,442.8 243.4,444.0 248.3,437.9 253.2,441.1 256.5,442.2 263.0,436.0 267.0,435.0 270.0,436.4 274.0,436.4 277.0,442.0 281.6,441.4 284.4,429.0 287.0,436.0 291.0,437.6 294.4,441.4 307.0,441.4 311.0,440.0 315.6,435.6 318.4,440.0 323.0,438.0 328.4,436.6 333.0,440.6 338.0,441.0 341.6,442.0 347.0,440.0 353.0,435.4 357.0,435.0 362.3,437.9 364.7,439.6 366.7,418.3 368.4,374.1 370.1,339.8 371.1,374.1 372.6,415.8 374.0,430.6 376.5,436.0 383.1,438.7 390.5,437.9 399.1,441.1 402.7,439.1 407.6,435.0 412.5,436.7 419.9,437.2 426.0,437.9 430.9,437.2 439.5,439.6 443.2,437.2"/>
<path d="M72.5,253.4V486 M67.5,482.2H445" stroke="#111" stroke-width="1" fill="none"/>
<path d="M72.5,253.4H445V486" stroke="#333" stroke-width="1" fill="none"/>
<path d="M67.5,482.2H76M70,475.7H75M70,469.1H75M70,462.6H75M70,456.1H75M67.5,449.5H76M70,443.0H75M70,436.4H75M70,429.9H75M70,423.4H75M67.5,416.8H76M70,410.3H75M70,403.8H75M70,397.2H75M70,390.7H75M67.5,384.1H76M70,377.6H75M70,371.1H75M70,364.5H75M70,358.0H75M67.5,351.5H76M70,344.9H75M70,338.4H75M70,331.8H75M70,325.3H75M67.5,318.8H76M70,312.2H75M70,305.7H75M70,299.2H75M70,292.6H75M67.5,286.1H76M70,279.5H75M70,273.0H75M70,266.5H75M70,259.9H75M67.5,253.4H76M72.5,478V486.3M88.0,480.2V484.6M103.5,480.2V484.6M119.1,480.2V484.6M134.6,480.2V484.6M150.1,480.2V484.6M165.6,478V486.3M181.1,480.2V484.6M196.7,480.2V484.6M212.2,480.2V484.6M227.7,480.2V484.6M243.2,480.2V484.6M258.8,478V486.3M274.3,480.2V484.6M289.8,480.2V484.6M305.3,480.2V484.6M320.8,480.2V484.6M336.4,480.2V484.6M351.9,478V486.3M367.4,480.2V484.6M382.9,480.2V484.6M398.4,480.2V484.6M414.0,480.2V484.6M429.5,480.2V484.6M445.0,478V486.3" stroke="#1a1a1a" stroke-width="0.8" fill="none"/>
<path d="M441,482.2H445M443,475.7H445M443,469.1H445M443,462.6H445M443,456.1H445M441,449.5H445M443,443.0H445M443,436.4H445M443,429.9H445M443,423.4H445M441,416.8H445M443,410.3H445M443,403.8H445M443,397.2H445M443,390.7H445M441,384.1H445M443,377.6H445M443,371.1H445M443,364.5H445M443,358.0H445M441,351.5H445M443,344.9H445M443,338.4H445M443,331.8H445M443,325.3H445M441,318.8H445M443,312.2H445M443,305.7H445M443,299.2H445M443,292.6H445M441,286.1H445M443,279.5H445M443,273.0H445M443,266.5H445M443,259.9H445M441,253.4H445M72.5,253.4V257.4M88.0,253.4V255.6M103.5,253.4V255.6M119.1,253.4V255.6M134.6,253.4V255.6M150.1,253.4V255.6M165.6,253.4V257.4M181.1,253.4V255.6M196.7,253.4V255.6M212.2,253.4V255.6M227.7,253.4V255.6M243.2,253.4V255.6M258.8,253.4V257.4M274.3,253.4V255.6M289.8,253.4V255.6M305.3,253.4V255.6M320.8,253.4V255.6M336.4,253.4V255.6M351.9,253.4V257.4M367.4,253.4V255.6M382.9,253.4V255.6M398.4,253.4V255.6M414.0,253.4V255.6M429.5,253.4V255.6M445.0,253.4V257.4" stroke="#333" stroke-width="0.9" fill="none"/>
<g font-family="Liberation Sans, sans-serif" font-size="11" fill="#444"><text transform="translate(54.1,485.6) scale(0.947,1)" text-anchor="middle">-20</text><text transform="translate(54.1,452.9) scale(0.947,1)" text-anchor="middle">-10</text><text transform="translate(54.1,420.2) scale(0.947,1)" text-anchor="middle">0</text><text transform="translate(54.1,387.5) scale(0.947,1)" text-anchor="middle">10</text><text transform="translate(54.1,354.9) scale(0.947,1)" text-anchor="middle">20</text><text transform="translate(54.1,322.2) scale(0.947,1)" text-anchor="middle">30</text><text transform="translate(54.1,289.5) scale(0.947,1)" text-anchor="middle">40</text><text transform="translate(54.1,256.8) scale(0.947,1)" text-anchor="middle">50</text><text transform="translate(72.1,499.7) scale(0.947,1)" text-anchor="middle">00:00</text><text transform="translate(165.2,499.7) scale(0.947,1)" text-anchor="middle">06:00</text><text transform="translate(258.4,499.7) scale(0.947,1)" text-anchor="middle">12:00</text><text transform="translate(351.5,499.7) scale(0.947,1)" text-anchor="middle">18:00</text><text transform="translate(444.6,499.7) scale(0.947,1)" text-anchor="middle">00:00</text></g>
<text transform="translate(36.6,367.6) rotate(-90) scale(1,0.947)" text-anchor="middle" font-family="Liberation Sans, sans-serif" font-weight="bold" font-size="11.2" fill="#111">Temperatures</text>
</g>
</svg>
</body></html>
